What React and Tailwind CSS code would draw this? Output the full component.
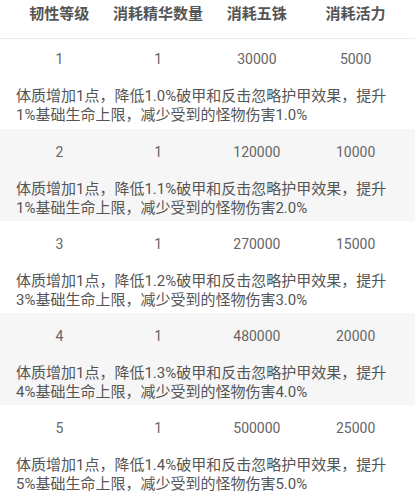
import React from "react";

const rows = [
  { level: 1, essence: 1, coin: "30000", vigor: "5000", desc: "体质增加1点，降低1.0%破甲和反击忽略护甲效果，提升1%基础生命上限，减少受到的怪物伤害1.0%" },
  { level: 2, essence: 1, coin: "120000", vigor: "10000", desc: "体质增加1点，降低1.1%破甲和反击忽略护甲效果，提升1%基础生命上限，减少受到的怪物伤害2.0%" },
  { level: 3, essence: 1, coin: "270000", vigor: "15000", desc: "体质增加1点，降低1.2%破甲和反击忽略护甲效果，提升3%基础生命上限，减少受到的怪物伤害3.0%" },
  { level: 4, essence: 1, coin: "480000", vigor: "20000", desc: "体质增加1点，降低1.3%破甲和反击忽略护甲效果，提升4%基础生命上限，减少受到的怪物伤害4.0%" },
  { level: 5, essence: 1, coin: "500000", vigor: "25000", desc: "体质增加1点，降低1.4%破甲和反击忽略护甲效果，提升5%基础生命上限，减少受到的怪物伤害5.0%" },
];

const headers = ["韧性等级", "消耗精华数量", "消耗五铢", "消耗活力"];

export default function App() {
  return (
    <div
      className="w-[415px] h-[500px] overflow-hidden bg-white text-[#555]"
      style={{ fontFamily: '"Roboto", "Noto Sans CJK SC", sans-serif' }}
    >
      <div className="grid grid-cols-4 px-[10px] h-[39px] pt-[5px] border-b border-[#ececec]">
        {headers.map((h) => (
          <div key={h} className="text-center text-[15px] leading-[19px] font-bold text-[#555]">
            {h}
          </div>
        ))}
      </div>
      {rows.map((r, i) => (
        <div key={r.level} className={i % 2 === 1 ? "bg-[#f6f6f6]" : "bg-white"}>
          <div
            className={`grid grid-cols-4 px-[10px] items-center text-sm text-[#666] ${
              i === 0 ? "h-[40px]" : "h-[46px]"
            }`}
          >
            <div className="text-center">{r.level}</div>
            <div className="text-center">{r.essence}</div>
            <div className="text-center">{r.coin}</div>
            <div className="text-center">{r.vigor}</div>
          </div>
          <p
            className={`px-4 text-[15px] leading-[19px] text-[#555] ${
              i === 0 ? "pt-[8px] pb-[4px]" : "pt-[5px] pb-[3px]"
            }`}
          >
            {r.desc}
          </p>
        </div>
      ))}
    </div>
  );
}
